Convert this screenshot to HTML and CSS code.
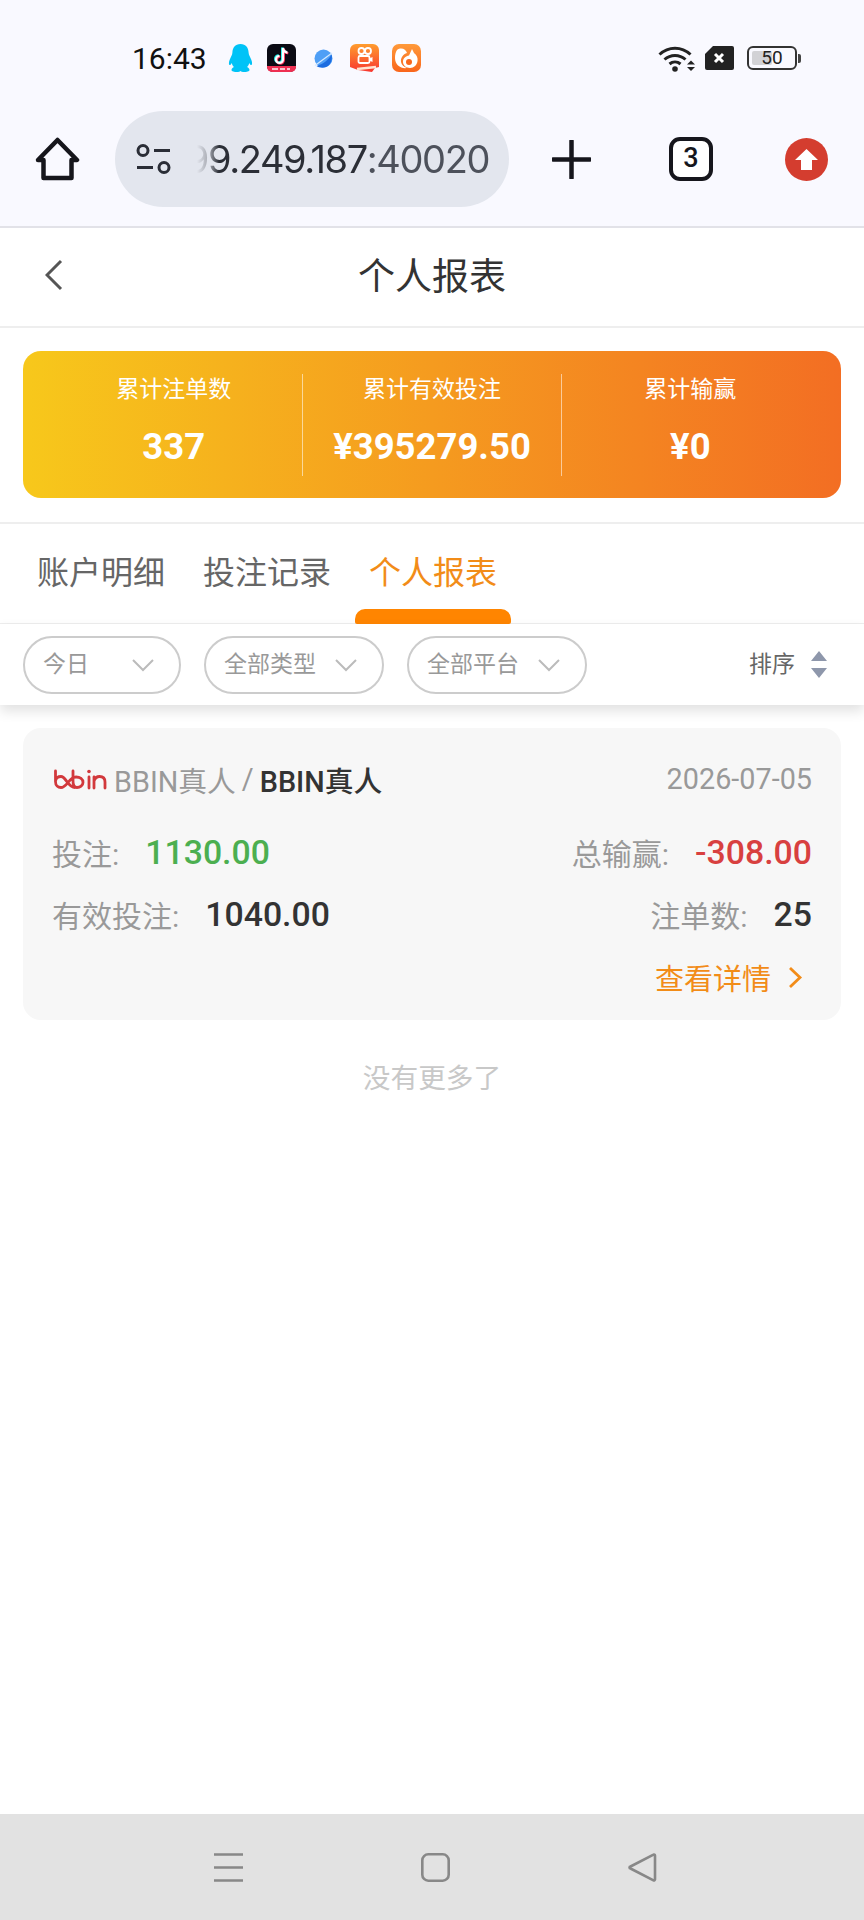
FILE: index.html
```html
<!DOCTYPE html>
<html lang="zh">
<head>
	<meta charset="UTF-8">
	<title>个人报表</title>
	<link rel="stylesheet" href="styles.css">
</head>
<body>
	<div class="browser-top">
		<div class="status-bar">
			<div class="status-left">
				<span class="time">16:43</span>
				<svg class="app-icon qq" viewBox="0 0 25 28"><path fill="#00c3f7" d="M12.5 0C7 0 4.6 4 4.4 8.5 4.3 11 3 12.500 1.800 15.500.800 18 .6 20.500 1.500 21c.7.3 1.600-.8 2.300-2 .3 1.600 1 3 2.200 4-1.400.7-2.500 1.600-2.500 3 0 1.400 3 2 5.500 2 1.500 0 2.800-.4 3.500-1.100.7.7 2 1.100 3.500 1.100 2.500 0 5.500-.6 5.500-2 0-1.400-1.100-2.300-2.500-3 1.200-1 1.900-2.400 2.200-4 .7 1.200 1.600 2.300 2.300 2 .9-.5.7-3-.3-5.500C22 12.500 20.700 11 20.600 8.500 20.400 4 18 0 12.500 0z"/></svg>
				<svg class="app-icon tiktok" viewBox="0 0 29 28">
					<rect width="29" height="28" rx="6" fill="#0b0b14"/>
					<path d="M0 22h29v1a5 5 0 0 1-5 5H5a5 5 0 0 1-5-5z" fill="#ee2f52"/>
					<path d="M5 25h6M13 25h5M20 25h3" stroke="#f7c4cd" stroke-width="2"/>
					<path d="M16 4v11.500a3.500 3.500 0 1 1-3.500-3.500M16 4c.4 2.600 2 4.200 4.500 4.600" fill="none" stroke="#25f4ee" stroke-width="2.400" transform="translate(-.8 -.6)"/>
					<path d="M16 4v11.500a3.500 3.500 0 1 1-3.500-3.500M16 4c.4 2.600 2 4.200 4.500 4.600" fill="none" stroke="#fe2c55" stroke-width="2.400" transform="translate(.8 .6)"/>
					<path d="M16 4v11.500a3.500 3.500 0 1 1-3.500-3.500M16 4c.4 2.600 2 4.200 4.500 4.600" fill="none" stroke="#fff" stroke-width="2.200"/>
				</svg>
				<svg class="app-icon planet" viewBox="0 0 22 19">
					<circle cx="11.500" cy="9.500" r="9" fill="#4f9ff6"/>
					<path d="M19.500 5.500C17 10 12 15 4.500 17c3 2.300 8.500 2.500 12-.5 3-2.500 4-7 3-11z" fill="#1c6ce0"/>
					<path d="M20 4 3 16.500" stroke="#d5e9ff" stroke-width="1.200"/>
				</svg>
				<svg class="app-icon kuaishou" viewBox="0 0 29 28">
					<defs>
						<linearGradient id="ksBg" x1="0" y1="0" x2="0" y2="1"><stop offset="0" stop-color="#ff9d2e"/><stop offset="1" stop-color="#f8362f"/></linearGradient>
					</defs>
					<path d="M6 0h17a6 6 0 0 1 6 6v17l-4 1-3 4-14-2-8-3V6a6 6 0 0 1 6-6z" fill="url(#ksBg)"/>
					<circle cx="11.500" cy="7" r="3" fill="none" stroke="#fff" stroke-width="1.800"/>
					<circle cx="18" cy="7" r="3" fill="none" stroke="#fff" stroke-width="1.800"/>
					<rect x="8.500" y="12" width="11" height="7" rx="1.500" fill="none" stroke="#fff" stroke-width="1.800"/>
					<path d="M19.500 14.500l3-1.500v5l-3-1.500z" fill="#fff"/>
					<path d="M7 25 26 23" stroke="#ffe3d0" stroke-width="2.600"/>
				</svg>
				<svg class="app-icon uc" viewBox="0 0 29 28">
					<defs>
						<linearGradient id="ucBg" x1="0" y1="0" x2="0" y2="1"><stop offset="0" stop-color="#ff9a3a"/><stop offset="1" stop-color="#f9661c"/></linearGradient>
					</defs>
					<rect width="29" height="28" rx="7" fill="url(#ucBg)"/>
					<path d="M5 6c4-3 9-1 10 3-4 1-6.500 5-6 9 .5 3 3 5 6 6-6 1-12-3-12-10 0-3 .5-6 2-8z" fill="#fff"/>
					<path d="M20 5l2 4c3 2 4 5 3.500 8-.5 4-3.500 7-7.500 7-4 0-7-3-7-6 0-4 3-6 6-6.500z" fill="#fff"/>
					<circle cx="17" cy="18" r="3" fill="#f9661c"/>
				</svg>
			</div>
			<div class="status-right">
				<svg class="wifi" viewBox="0 0 37 27">
					<path d="M1.500 9.500c9-8.500 22-8.500 31 0M6.500 14.500c6-5.500 15-5.500 21 0M11.500 19c3.200-2.700 7.800-2.700 11 0" fill="none" stroke="#222" stroke-width="3"/>
					<circle cx="17" cy="24" r="2.800" fill="#222"/>
					<path d="M29 19.500h8l-4-4zM29 22h8l-4 4z" fill="#222"/>
				</svg>
				<svg class="sim" viewBox="0 0 29 24">
					<path d="M8 0h19a2 2 0 0 1 2 2v20a2 2 0 0 1-2 2H2a2 2 0 0 1-2-2V8z" fill="#222"/>
					<path d="M10 8l8 8M18 8l-8 8" stroke="#fff" stroke-width="3"/>
				</svg>
				<div class="battery">
					<div class="battery-body"><span class="battery-fill"></span><span class="battery-num">50</span></div>
					<span class="battery-nub"></span>
				</div>
			</div>
		</div>
		<div class="browser-bar">
			<svg class="home-icon" viewBox="0 0 45 44"><path d="M3 23 22.500 3 42 23h-5.500v18h-28V23z" fill="none" stroke="#16161c" stroke-width="4.500" stroke-linejoin="round"/></svg>
			<div class="url-bar">
				<svg class="tune-icon" viewBox="0 0 36 30">
					<circle cx="7" cy="6.500" r="5" fill="none" stroke="#2a2d36" stroke-width="3"/>
					<path d="M18 6.500h16M1 23.500h16" stroke="#2a2d36" stroke-width="3.200"/>
					<circle cx="28" cy="23.500" r="5" fill="none" stroke="#2a2d36" stroke-width="3"/>
				</svg>
				<div class="url-text"><span>99.249.187</span><span class="url-port">:40020</span></div>
			</div>
			<svg class="plus-icon" viewBox="0 0 39 39"><path d="M19.500 1v37M1 19.500h37" stroke="#16161c" stroke-width="4.500" stroke-linecap="round"/></svg>
			<div class="tab-count">3</div>
			<svg class="update-icon" viewBox="0 0 43 43">
				<circle cx="21.500" cy="21.500" r="21.500" fill="#d43d2f"/>
				<path d="M21.500 11 33 22h-6v10H16V22h-6z" fill="#fff"/>
			</svg>
		</div>
	</div>

	<div class="page-head">
		<svg class="back-icon" viewBox="0 0 18 32"><path d="M16 2 2 16l14 14" fill="none" stroke="#555" stroke-width="3"/></svg>
		<h1 class="page-title">个人报表</h1>
	</div>

	<div class="summary-wrap">
		<div class="summary">
			<div class="summary-item">
				<div class="summary-label">累计注单数</div>
				<div class="summary-value">337</div>
			</div>
			<div class="summary-item">
				<div class="summary-label">累计有效投注</div>
				<div class="summary-value">¥395279.50</div>
			</div>
			<div class="summary-item">
				<div class="summary-label">累计输赢</div>
				<div class="summary-value">¥0</div>
			</div>
		</div>
	</div>

	<div class="tabs">
		<span class="tab">账户明细</span>
		<span class="tab">投注记录</span>
		<span class="tab tab-active">个人报表</span>
	</div>

	<div class="filters">
		<div class="pill pill-short">
			<span class="pill-text">今日</span>
			<svg class="pill-arrow" viewBox="0 0 24 14"><path d="M2 2l10 10L22 2" fill="none" stroke="#bbb" stroke-width="2"/></svg>
		</div>
		<div class="pill">
			<span class="pill-text">全部类型</span>
			<svg class="pill-arrow" viewBox="0 0 24 14"><path d="M2 2l10 10L22 2" fill="none" stroke="#bbb" stroke-width="2"/></svg>
		</div>
		<div class="pill">
			<span class="pill-text">全部平台</span>
			<svg class="pill-arrow" viewBox="0 0 24 14"><path d="M2 2l10 10L22 2" fill="none" stroke="#bbb" stroke-width="2"/></svg>
		</div>
		<div class="sort">
			<span class="pill-text">排序</span>
			<svg class="sort-icon" viewBox="0 0 18 27"><path d="M9 0l8 10H1zM9 27 1 17h16z" fill="#8e97ab"/></svg>
		</div>
	</div>

	<div class="content">
		<div class="report-card">
			<div class="card-row card-head">
				<div class="game-name">
					<svg class="bbin-logo" viewBox="0 0 54 22">
						<path d="M2.500 3v10.500c0 4 2.500 6 5.500 6 6 0 8-10.500 15-10.500 4 0 7 2 7 5.500 0 3-3 5-6 5-4 0-4-3.500-4-6.500V3M2.500 13c.5-3 3-4.500 5.500-4.500 5 0 7 11 14 11M36 9v11M41 20V9M41 13c1-3 3-4.500 5.500-4.500 3.500 0 5.500 2 5.500 5.500v6" fill="none" stroke="#d2393c" stroke-width="2.800" stroke-linecap="round"/>
						<circle cx="36" cy="3.500" r="1.800" fill="#d2393c"/>
					</svg>
					<span class="game-type">BBIN真人</span>
					<span class="game-sep">/</span>
					<span class="game-title">BBIN真人</span>
				</div>
				<span class="card-date">2026-07-05</span>
			</div>
			<div class="card-row card-bet">
				<div class="stat"><span class="stat-label">投注:</span><span class="stat-num green">1130.00</span></div>
				<div class="stat"><span class="stat-label">总输赢:</span><span class="stat-num red">-308.00</span></div>
			</div>
			<div class="card-row card-valid">
				<div class="stat"><span class="stat-label">有效投注:</span><span class="stat-num">1040.00</span></div>
				<div class="stat"><span class="stat-label">注单数:</span><span class="stat-num">25</span></div>
			</div>
			<div class="card-link">
				<span>查看详情</span>
				<svg class="link-arrow" viewBox="0 0 15 23"><path d="M2 2l10 9.500L2 21" fill="none" stroke="#f28c18" stroke-width="2.800"/></svg>
			</div>
		</div>
		<p class="no-more">没有更多了</p>
	</div>

	<div class="nav-bar">
		<svg class="nav-icon" viewBox="0 0 29 29"><path d="M0 1.500h29M0 14.500h29M0 27.500h29" stroke="#888" stroke-width="2.600"/></svg>
		<svg class="nav-icon" viewBox="0 0 29 29"><rect x="1.300" y="1.300" width="26.400" height="26.400" rx="6" fill="none" stroke="#888" stroke-width="2.600"/></svg>
		<svg class="nav-icon" viewBox="0 0 29 29"><path d="M27 2.500v24a1 1 0 0 1-1.500.8L2.500 15.500a1 1 0 0 1 0-2L25.500 1.700a1 1 0 0 1 1.500.8z" fill="none" stroke="#888" stroke-width="2.600" stroke-linejoin="round"/></svg>
	</div>
</body>
</html>
```

FILE: styles.css
```css
* { box-sizing: border-box; }

html, body { margin: 0; padding: 0; }

body {
	width: 864px;
	height: 1920px;
	display: flex;
	flex-direction: column;
	overflow: hidden;
	background: #fff;
	font-family: Roboto, "Noto Sans CJK SC", sans-serif;
	color: #333;
}

/* phone status + browser chrome */
.browser-top {
	height: 228px;
	background: #f9f9ff;
	border-bottom: 2px solid #e2e2e8;
}

.status-bar {
	display: flex;
	justify-content: space-between;
	align-items: center;
	height: 30px;
	margin-top: 43px;
	padding: 0 63px 0 132px;
}
.status-left, .status-right { display: flex; align-items: center; }

.time { font-size: 30px; color: #111; width: 96px; }

.app-icon { display: block; height: 28px; flex: none; }
.qq { width: 25px; }
.tiktok { width: 29px; margin-left: 14px; }
.planet { width: 22px; height: 19px; margin-left: 16px; }
.kuaishou { width: 29px; margin-left: 16px; }
.uc { width: 29px; margin-left: 13px; }

.wifi { width: 37px; height: 27px; }
.sim { width: 29px; height: 24px; margin-left: 10px; }

.battery { display: flex; align-items: center; margin-left: 13px; }
.battery-body {
	position: relative;
	width: 50px;
	height: 24px;
	padding: 3px;
	border: 2px solid #333;
	border-radius: 6px;
}
.battery-fill { display: block; width: 50%; height: 100%; background: #d2d2d6; border-radius: 2px; }
.battery-num {
	position: absolute;
	inset: 0;
	text-align: center;
	font-size: 19px;
	line-height: 20px;
	color: #222;
}
.battery-nub { width: 3px; height: 9px; margin-left: 1px; background: #444; border-radius: 0 2px 2px 0; }

.browser-bar {
	display: flex;
	align-items: center;
	height: 96px;
	margin-top: 38px;
	padding-left: 35px;
}
.home-icon { width: 45px; height: 44px; flex: none; }

.url-bar {
	display: flex;
	align-items: center;
	width: 394px;
	height: 96px;
	margin-left: 35px;
	padding: 0 20px 0 21px;
	background: #e3e6ee;
	border-radius: 48px;
}
.tune-icon { width: 36px; height: 30px; flex: none; }
.url-text {
	flex: 1;
	display: flex;
	justify-content: flex-end;
	overflow: hidden;
	margin-left: 25px;
	font-family: Inter, sans-serif;
	font-size: 38px;
	letter-spacing: -1.400px;
	line-height: 46px;
	white-space: nowrap;
	color: #2b2e36;
	-webkit-mask-image: linear-gradient(to right, transparent 0, rgba(0, 0, 0, .35) 12px, #000 22px);
	mask-image: linear-gradient(to right, transparent 0, rgba(0, 0, 0, .35) 12px, #000 22px);
}
.url-port { color: #4d515b; }

.plus-icon { width: 39px; height: 39px; margin-left: 43px; flex: none; }
.tab-count {
	width: 44px;
	height: 44px;
	margin-left: 78px;
	border: 4.500px solid #16161c;
	border-radius: 11px;
	background: #fff;
	text-align: center;
	font-size: 27px;
	font-weight: 500;
	line-height: 35px;
	color: #16161c;
	flex: none;
}
.update-icon { width: 43px; height: 43px; margin-left: 72px; flex: none; }

/* page header */
.page-head {
	position: relative;
	display: flex;
	align-items: center;
	justify-content: center;
	height: 100px;
	padding-bottom: 6px;
	border-bottom: 2px solid #eee;
}
.back-icon { position: absolute; left: 45px; top: 31px; width: 18px; height: 32px; }
.page-title { margin: 0; font-size: 37px; font-weight: 400; color: #333; }

/* totals card */
.summary-wrap { height: 196px; padding: 23px 23px 0; border-bottom: 2px solid #eee; }
.summary {
	display: flex;
	align-items: center;
	height: 147px;
	padding: 0 22px;
	border-radius: 18px;
	background: linear-gradient(to right, #f7c81b, #f36e23);
	color: #fff;
}
.summary-item {
	flex: 1;
	height: 102px;
	text-align: center;
	border-left: 1px solid rgba(255, 255, 255, .55);
}
.summary-item:first-child { border-left: 0; }
.summary-label { font-size: 23px; line-height: 32px; }
.summary-value { margin-top: 19px; font-size: 36.500px; font-weight: 700; line-height: 44px; }

/* tabs */
.tabs {
	display: flex;
	gap: 38px;
	height: 100px;
	padding: 0 37px;
	border-bottom: 1px solid #eee;
}
.tab { position: relative; font-size: 32px; line-height: 98px; color: #666; }
.tab-active { color: #f28c18; }
.tab-active::after {
	content: "";
	position: absolute;
	left: -14px;
	right: -14px;
	bottom: -1px;
	height: 15px;
	background: #ff8500;
	border-radius: 10px 10px 2px 2px;
}

/* filter row */
.filters {
	position: relative;
	display: flex;
	align-items: center;
	height: 81px;
	padding: 0 36px 0 23px;
	background: #fff;
	box-shadow: 0 6px 12px rgba(0, 0, 0, .12);
}
.pill {
	display: flex;
	align-items: center;
	justify-content: space-between;
	width: 180px;
	height: 58px;
	margin-right: 23px;
	padding: 0 24px 0 18px;
	border: 2px solid #ccc;
	border-radius: 29px;
	font-size: 23px;
	color: #999;
}
.pill-short { width: 158px; }
.pill-text { padding-bottom: 5px; }
.pill-arrow { width: 24px; height: 14px; }
.sort { display: flex; align-items: center; margin-left: auto; font-size: 23px; color: #666; }
.sort-icon { width: 18px; height: 27px; margin-left: 15px; }

/* report card */
.content { flex: 1; padding: 23px 23px 0; }
.report-card {
	height: 292px;
	padding: 30px 29px 0;
	background: #f7f7f7;
	border-radius: 18px;
}
.card-row { display: flex; align-items: center; justify-content: space-between; }
.card-head { height: 42px; }
.card-bet { height: 44px; margin-top: 30px; }
.card-valid { height: 44px; margin-top: 18px; }

.game-name { display: flex; align-items: center; font-size: 28.800px; }
.bbin-logo { width: 54px; height: 22px; margin: 0 7px 0 1px; }
.game-type { color: #999; }
.game-sep { margin: 0 6px; color: #999; }
.game-title { color: #333; font-weight: 500; }
.card-date { font-size: 28.800px; color: #999; }

.stat { display: flex; align-items: center; }
.stat-label { font-size: 30px; color: #999; }
.stat-num { margin-left: 26px; font-size: 33.800px; font-weight: 500; color: #333; }
.green { color: #4caf50; }
.red { color: #d8403f; }

.card-link {
	display: flex;
	align-items: center;
	justify-content: flex-end;
	height: 44px;
	margin-top: 19px;
	padding-right: 9px;
	font-size: 29px;
	color: #f28c18;
}
.link-arrow { width: 15px; height: 23px; margin-left: 17px; }

.no-more { margin: 39px 0 0; text-align: center; font-size: 27.700px; line-height: 40px; color: #c8c8c8; }

/* android nav bar */
.nav-bar {
	display: flex;
	height: 106px;
	padding: 39px 0 0 214px;
	background: #e2e2e2;
}
.nav-icon { width: 29px; height: 29px; margin-right: 178px; }
```
